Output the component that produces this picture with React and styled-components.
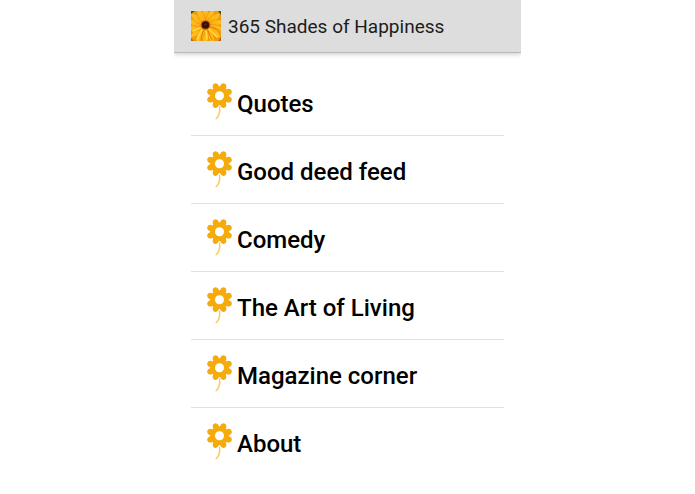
import React from 'react';
import styled, { createGlobalStyle } from 'styled-components';

const colors = {
  white: '#ffffff',
  bar: '#dddddd',
  barEdge: '#b9b9b9',
  title: '#1c1c1c',
  text: '#000000',
  divider: '#e1e1e1',
  petal: '#f6ab0c',
  stem: '#f3cf6c',
};

const GlobalStyle = createGlobalStyle`
  * {
    box-sizing: border-box;
  }
  body {
    margin: 0;
    background-color: ${colors.white};
    font-family: Roboto, 'Liberation Sans', sans-serif;
  }
`;

const Screen = styled.div`
  max-width: 347px;
  margin: 0 auto;
`;

const ActionBar = styled.header`
  display: flex;
  align-items: center;
  gap: 7px;
  padding: 10px 17px;
  background-color: ${colors.bar};
  border-bottom: 1px solid ${colors.barEdge};
  box-shadow: 0 2px 4px rgba(0, 0, 0, 0.16);
  clip-path: inset(0 0 -8px 0);
`;

const Title = styled.h1`
  margin: 0;
  padding-top: 2px;
  font-size: 19px;
  font-weight: 400;
  line-height: 30px;
  color: ${colors.title};
`;

const Menu = styled.ul`
  margin: 0;
  padding: 15px 17px;
  list-style: none;
`;

const MenuItem = styled.li`
  border-bottom: 1px solid ${colors.divider};

  &:last-child {
    border-bottom: none;
  }
`;

const MenuLink = styled.a`
  display: flex;
  align-items: center;
  gap: 4px;
  height: 67px;
  padding: 0 16px;
  font-size: 24px;
  font-weight: 500;
  line-height: 28px;
  color: ${colors.text};
  text-decoration: none;
`;

const MenuLabel = styled.span`
  padding-top: 4px;
`;

const petalAngles = [22.5, 67.5, 112.5, 157.5, 202.5, 247.5, 292.5, 337.5];

const Flower = () => (
  <svg width="26" height="38" viewBox="0 0 26 38" aria-hidden="true">
    <path
      d="M12.6 24 C13.2 28.5 12.4 32.5 9.2 35.8"
      fill="none"
      stroke={colors.stem}
      strokeWidth="1.5"
      strokeLinecap="round"
    />
    <g fill={colors.petal}>
      <circle cx="12.5" cy="12.7" r="9.2" />
      {petalAngles.map((angle) => (
        <ellipse
          key={angle}
          cx="12.5"
          cy="4.2"
          rx="3.2"
          ry="4.6"
          transform={`rotate(${angle} 12.5 12.7)`}
        />
      ))}
    </g>
    <circle cx="12.5" cy="12.7" r="4.5" fill={colors.white} />
  </svg>
);

const outerPetals = [0, 26, 50, 77, 103, 129, 155, 181, 207, 232, 258, 284, 309, 335];

const AppIcon = () => (
  <svg width="30" height="30" viewBox="0 0 30 30" aria-hidden="true">
    <defs>
      <linearGradient id="petalShade" x1="0" y1="0" x2="0" y2="1">
        <stop offset="0" stopColor="#ffc526" />
        <stop offset="0.65" stopColor="#fdb012" />
        <stop offset="1" stopColor="#ea8208" />
      </linearGradient>
      <clipPath id="iconFrame">
        <rect width="30" height="30" />
      </clipPath>
    </defs>
    <g clipPath="url(#iconFrame)">
      <rect width="30" height="30" fill="#f09c10" />
      {outerPetals.map((angle) => (
        <path
          key={angle}
          d="M14.5 14.5 C10 8 10.5 0 14.5 -5 C18.5 0 19 8 14.5 14.5Z"
          fill="url(#petalShade)"
          stroke="#e58a0a"
          strokeWidth="0.5"
          transform={`rotate(${angle} 14.5 14.5)`}
        />
      ))}
      <path d="M0 0H4L0 3Z M27 0H30V4Z" fill="#3c5a1c" />
      <path d="M0 27L3 30H0Z M30 26V30H27Z" fill="#b5651a" />
      <path
        d="M11 19L6 28 M15 20L16 28 M18 18L26 26 M9 17L2 20"
        stroke="#ffdc3c"
        strokeWidth="1.6"
        strokeLinecap="round"
      />
      <path
        d="M12 20L10 28 M17 20L21 29 M20 16L28 19"
        stroke="#d9780a"
        strokeWidth="0.9"
        strokeLinecap="round"
      />
      <circle cx="14.5" cy="14" r="4.8" fill="#b04a08" opacity="0.6" />
      <circle cx="14.5" cy="14" r="3.8" fill="#3b0d08" />
      <circle cx="14.5" cy="13.5" r="1.1" fill="#6a2410" />
    </g>
  </svg>
);

const menuItems = [
  { label: 'Quotes', href: '#quotes' },
  { label: 'Good deed feed', href: '#good-deed-feed' },
  { label: 'Comedy', href: '#comedy' },
  { label: 'The Art of Living', href: '#art-of-living' },
  { label: 'Magazine corner', href: '#magazine-corner' },
  { label: 'About', href: '#about' },
];

const App = () => (
  <>
    <GlobalStyle />
    <Screen>
      <ActionBar>
        <AppIcon />
        <Title>365 Shades of Happiness</Title>
      </ActionBar>
      <nav>
        <Menu>
          {menuItems.map(({ label, href }) => (
            <MenuItem key={label}>
              <MenuLink href={href}>
                <Flower />
                <MenuLabel>{label}</MenuLabel>
              </MenuLink>
            </MenuItem>
          ))}
        </Menu>
      </nav>
    </Screen>
  </>
);

export default App;
